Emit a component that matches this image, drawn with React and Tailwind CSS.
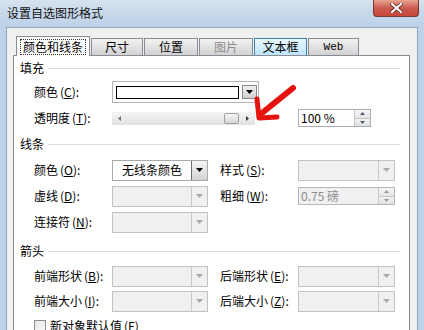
import React from 'react';

const font = "font-['Noto_Sans_CJK_SC','Noto_Sans',sans-serif]";

function Tri({ color = '#000', w = 7, h = 4 }) {
  return (
    <svg width={w} height={h} viewBox="0 0 7 4">
      <path d="M0 0 L7 0 L3.5 4 Z" fill={color} />
    </svg>
  );
}

function Label({ text, k, rest = '):' }) {
  return (
    <span className="whitespace-nowrap">
      {text}
      <span className="ml-[2px]">(</span>
      <span className="underline">{k}</span>
      {rest}
    </span>
  );
}

function Section({ title, className }) {
  return (
    <div className={`flex items-center pl-[6px] pr-[9px] ${className}`}>
      <span>{title}</span>
      <div className="ml-[4px] h-px flex-1 bg-[#dcdcdc]" />
    </div>
  );
}

function Combo({ text, disabled, w = 'w-[96px]' }) {
  return (
    <div
      className={`${w} h-[21px] flex border ${
        disabled ? 'border-[#c2c2c2] bg-[#f0f0f0]' : 'border-[#a9a9a9] bg-white'
      }`}
    >
      <div className="flex-1 flex items-center pl-[9px] text-[12px]">{text}</div>
      <div
        className={`w-[16px] flex items-center justify-center border-l ${
          disabled
            ? 'border-[#c9c9c9] bg-[#f0f0f0]'
            : 'border-[#6e6e6e] bg-gradient-to-b from-[#f4f4f4] to-[#d4d4d4]'
        }`}
      >
        <Tri color={disabled ? '#a8a8a8' : '#000'} />
      </div>
    </div>
  );
}

function Spinner({ text, disabled, w }) {
  return (
    <div className={`${w} h-[18px] flex border ${disabled ? 'border-[#b8b8b8] bg-[#f0f0f0]' : 'border-[#abadb3] bg-white'}`}>
      <div className={`flex-1 flex items-center pl-[2px] text-[12px] ${disabled ? 'text-[#8d8d8d]' : 'text-black'}`}>
        {text}
      </div>
      <div className="w-[16px] flex flex-col border-l border-[#c8c8c8]">
        <div className="flex-1 flex items-center justify-center border-b border-[#c8c8c8] bg-gradient-to-b from-[#f7f7f7] to-[#e4e4e4]">
          <svg width="5" height="3" viewBox="0 0 5 3"><path d="M0 3 L5 3 L2.5 0 Z" fill={disabled ? '#9a9a9a' : '#4a5a6a'} /></svg>
        </div>
        <div className="flex-1 flex items-center justify-center bg-gradient-to-b from-[#f2f2f2] to-[#e0e0e0]">
          <svg width="5" height="3" viewBox="0 0 5 3"><path d="M0 0 L5 0 L2.5 3 Z" fill={disabled ? '#9a9a9a' : '#4a5a6a'} /></svg>
        </div>
      </div>
    </div>
  );
}

function Tab({ children, w, selected, hover, disabled }) {
  if (selected) {
    return (
      <div className={`${w} h-[20px] -mb-px relative z-10 bg-white border border-b-0 border-[#898c95] flex items-center justify-center`}>
        <span className="outline outline-1 outline-dotted outline-[#333] px-[2px] leading-[14px]">{children}</span>
      </div>
    );
  }
  return (
    <div
      className={`${w} h-[17px] border border-b-0 flex items-center justify-center ${
        hover
          ? 'border-[#3c7fb1] bg-gradient-to-b from-[#eaf6fd] to-[#bee6fd]'
          : 'border-[#898c95] bg-gradient-to-b from-[#f2f2f2] to-[#d2d2d2]'
      } ${disabled ? 'text-[#8d8d8d]' : 'text-black'}`}
    >
      {children}
    </div>
  );
}

export default function App() {
  return (
    <div className={`relative w-[424px] h-[330px] overflow-hidden flex flex-col bg-[#bdd3ea] text-[12px] text-black ${font}`}>
      {/* title bar */}
      <div className="h-[27px] shrink-0 flex items-start justify-between bg-gradient-to-b from-[#d6e2ee] via-[#c7d8ea] to-[#bcd2ea]">
        <div className="pl-[7px] pt-[5px] text-[12px] leading-[16px] text-[#111]">设置自选图形格式</div>
        <div className="mr-[5px] w-[46px] h-[17px] rounded-b-[4px] border border-t-0 border-[#7a3a38] bg-gradient-to-b from-[#e8a491] via-[#c95a4f] to-[#c9473a] flex items-center justify-center">
          <svg width="13" height="10" viewBox="0 0 13 10">
            <path d="M2 1 L11 9 M11 1 L2 9" stroke="#5a2622" strokeWidth="3.6" strokeLinecap="square" />
            <path d="M2 1 L11 9 M11 1 L2 9" stroke="#ffffff" strokeWidth="2.2" strokeLinecap="square" />
          </svg>
        </div>
      </div>

      {/* client area */}
      <div className="flex-1 mx-[6px] bg-[#f0f0f0] border border-b-0 border-[#8ea4bc] pt-[8px] pl-[6px] pr-[7px] flex flex-col">
        <div className="h-[19px] flex items-end gap-[1px] pl-[3px] shrink-0">
          <Tab w="w-[74px]" selected>颜色和线条</Tab>
          <Tab w="w-[52px]">尺寸</Tab>
          <Tab w="w-[54px]">位置</Tab>
          <Tab w="w-[54px]" disabled>图片</Tab>
          <Tab w="w-[53px]" hover>文本框</Tab>
          <Tab w="w-[51px]">
            <span className="font-['Liberation_Mono',monospace] text-[11px]">Web</span>
          </Tab>
        </div>

        <div className="flex-1 bg-white border border-[#898c95] pt-[1px] flex flex-col overflow-hidden">
          <Section title="填充" className="h-[22px]" />

          <div className="h-[26px] flex items-center pl-[20px]">
            <div className="w-[78px]"><Label text="颜色" k="C" /></div>
            <div className="w-[147px] h-[22px] border border-[#b5b5b5] bg-white flex items-center pl-[3px] pr-[1px] gap-[3px]">
              <div className="flex-1 h-[13px] border border-black" />
              <div className="w-[15px] h-[14px] border border-[#8a8a8a] bg-gradient-to-b from-[#f0f0f0] to-[#d0d0d0] flex items-center justify-center">
                <Tri />
              </div>
            </div>
          </div>

          <div className="h-[26px] flex items-center pl-[20px]">
            <div className="w-[78px]"><Label text="透明度" k="T" /></div>
            <div className="w-[143px] h-[13px] bg-gradient-to-b from-[#f4f4f4] to-[#e2e2e2] flex items-center">
              <svg className="ml-[6px]" width="3" height="5" viewBox="0 0 3 5"><path d="M3 0 L3 5 L0 2.5 Z" fill="#6d6d6d" /></svg>
              <div className="flex-1" />
              <div className="w-[15px] h-[11px] rounded-[2px] border border-[#a0a0a0] bg-gradient-to-b from-[#f5f5f5] to-[#d7d7d7]" />
              <svg className="ml-[7px] mr-[6px]" width="3" height="5" viewBox="0 0 3 5"><path d="M0 0 L0 5 L3 2.5 Z" fill="#333" /></svg>
            </div>
            <div className="ml-[43px]">
              <Spinner text="100 %" w="w-[73px]" />
            </div>
          </div>

          <Section title="线条" className="h-[26px]" />

          <div className="h-[26px] flex items-center pl-[20px]">
            <div className="w-[78px]"><Label text="颜色" k="O" /></div>
            <Combo text="无线条颜色" />
            <div className="w-[78px] ml-[12px]"><Label text="样式" k="S" /></div>
            <Combo disabled w="w-[97px]" />
          </div>

          <div className="h-[26px] flex items-center pl-[20px]">
            <div className="w-[78px]"><Label text="虚线" k="D" /></div>
            <Combo disabled />
            <div className="w-[78px] ml-[12px]"><Label text="粗细" k="W" /></div>
            <Spinner text="0.75 磅" disabled w="w-[97px]" />
          </div>

          <div className="h-[26px] flex items-center pl-[20px]">
            <div className="w-[78px]"><Label text="连接符" k="N" /></div>
            <Combo disabled />
          </div>

          <Section title="箭头" className="h-[29px] pt-[3px]" />

          <div className="h-[24px] flex items-center pl-[20px]">
            <div className="w-[78px]"><Label text="前端形状" k="B" /></div>
            <Combo disabled />
            <div className="w-[78px] ml-[12px]"><Label text="后端形状" k="E" /></div>
            <Combo disabled w="w-[97px]" />
          </div>

          <div className="h-[26px] flex items-center pl-[20px]">
            <div className="w-[78px]"><Label text="前端大小" k="I" /></div>
            <Combo disabled />
            <div className="w-[78px] ml-[12px]"><Label text="后端大小" k="Z" /></div>
            <Combo disabled w="w-[97px]" />
          </div>

          <div className="h-[24px] flex items-center pl-[20px] shrink-0">
            <div className="w-[12px] h-[12px] border border-[#8e8f8f] bg-gradient-to-br from-[#e6e6e6] to-[#fafafa]" />
            <span className="ml-[4px]"><Label text="新对象默认值" k="F" rest=")" /></span>
          </div>
        </div>
      </div>

      {/* red annotation arrow */}
      <svg className="absolute left-[248px] top-[82px]" width="50" height="44" viewBox="248 82 50 44">
        <path d="M293 88 L262 113" stroke="#e4130f" strokeWidth="6" strokeLinecap="round" />
        <path d="M257 99 L259 118 L277 117" stroke="#e4130f" strokeWidth="5" strokeLinecap="round" strokeLinejoin="round" fill="none" />
      </svg>
    </div>
  );
}
